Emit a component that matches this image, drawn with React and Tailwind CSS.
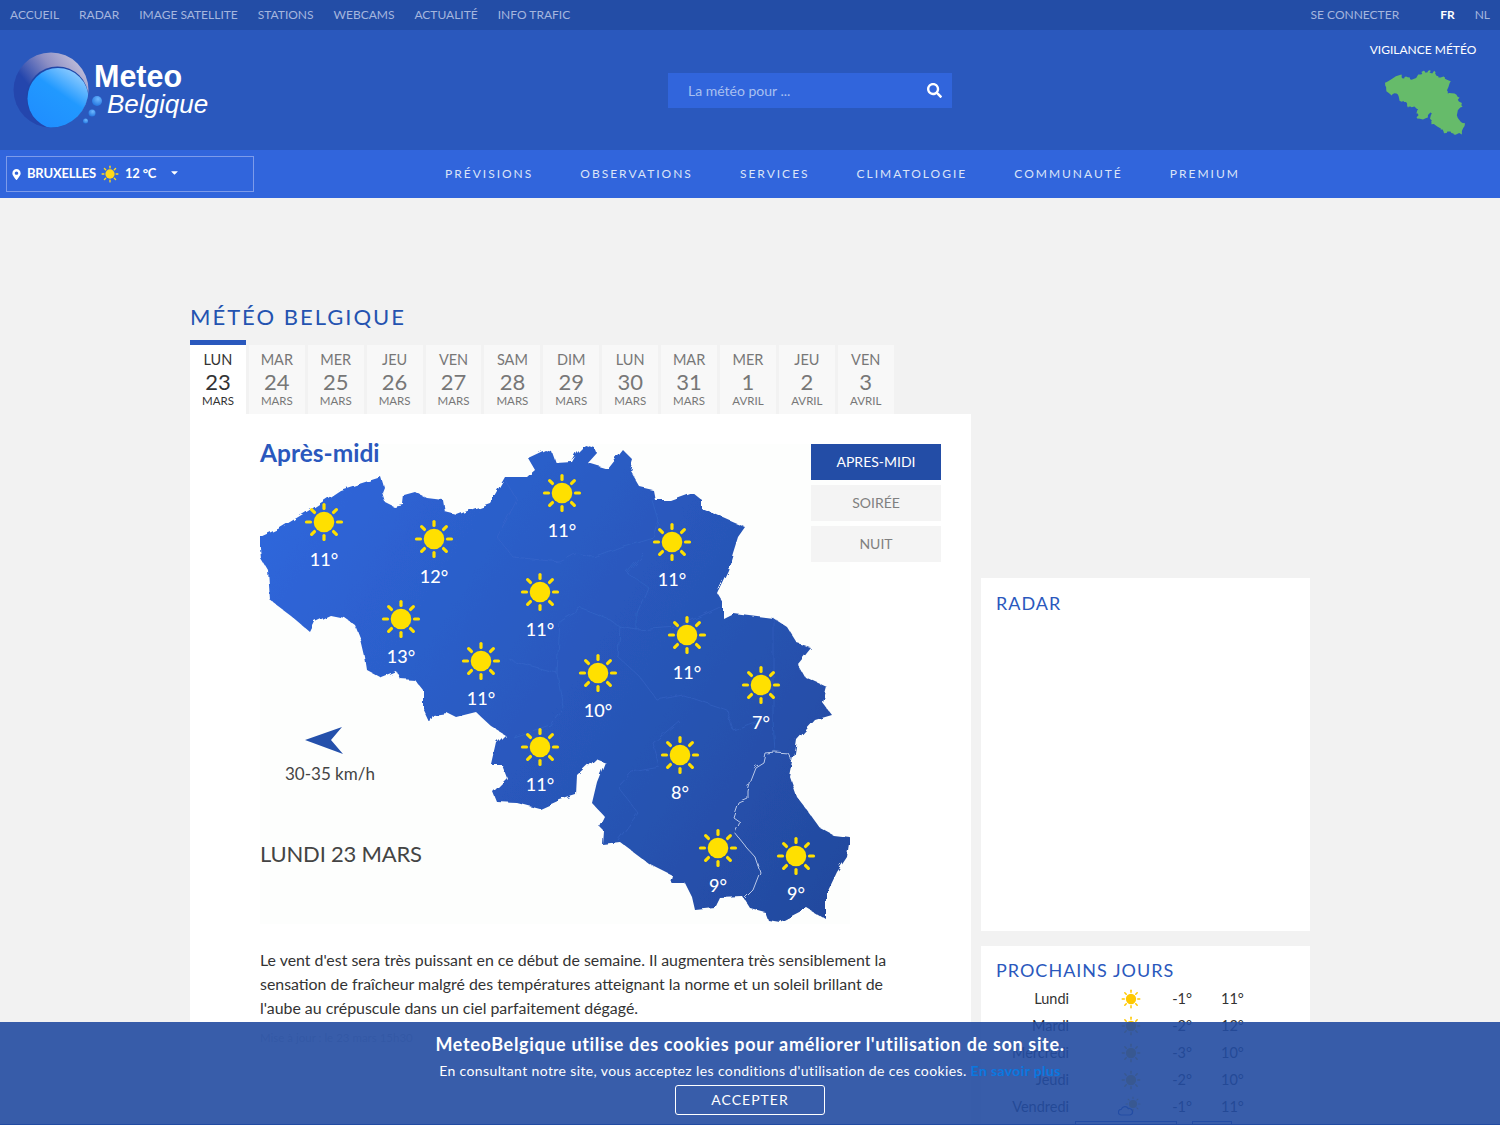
import { FaSearch, FaMapMarkerAlt, FaCaretDown } from "react-icons/fa";

const topLinks = ["Accueil", "Radar", "Image satellite", "Stations", "Webcams", "Actualité", "Info trafic"];
const navLinks = ["Prévisions", "Observations", "Services", "Climatologie", "Communauté", "Premium"];

const days = [
  ["LUN", "23", "MARS"], ["MAR", "24", "MARS"], ["MER", "25", "MARS"], ["JEU", "26", "MARS"],
  ["VEN", "27", "MARS"], ["SAM", "28", "MARS"], ["DIM", "29", "MARS"], ["LUN", "30", "MARS"],
  ["MAR", "31", "MARS"], ["MER", "1", "AVRIL"], ["JEU", "2", "AVRIL"], ["VEN", "3", "AVRIL"],
];

// sun centres on the map, in page coordinates
const pins = [
  [324, 522, "11°"], [434, 539, "12°"], [562, 493, "11°"], [672, 542, "11°"], [540, 592, "11°"],
  [401, 619, "13°"], [481, 661, "11°"], [598, 673, "10°"], [687, 635, "11°"], [761, 685, "7°"],
  [540, 747, "11°"], [680, 755, "8°"], [718, 848, "9°"], [796, 856, "9°"],
];

const nextDays = [
  ["Lundi", "-1°", "11°"], ["Mardi", "-2°", "12°"], ["Mercredi", "-3°", "10°"],
  ["Jeudi", "-2°", "10°"], ["Vendredi", "-1°", "11°"],
];

const belgium = "M260 537 L280 528 L313 508 L340 490 L381 477 L384 487 L382 492 L385 502 L393 506 L403 504 L404 495 L415 492 L427 498 L443 500 L445 512 L457 515 L470 510 L490 503 L505 477 L527 477 L535 470 L528 458 L545 450 L552 452 L556 463 L572 462 L577 453 L585 445 L595 448 L597 453 L588 463 L608 469 L623 450 L633 460 L630 470 L640 487 L653 490 L655 500 L670 500 L692 492 L702 500 L702 509 L717 515 L735 523 L745 527 L738 537 L733 553 L728 570 L717 593 L723 603 L723 618 L733 613 L773 618 L787 627 L797 643 L810 647 L797 663 L805 677 L827 687 L823 703 L832 715 L815 720 L797 740 L795 753 L790 777 L797 797 L807 810 L820 828 L833 835 L850 837 L847 857 L837 872 L827 893 L827 920 L807 908 L780 922 L768 920 L765 912 L750 908 L743 897 L720 898 L715 908 L695 910 L692 897 L685 883 L670 883 L672 875 L648 863 L640 857 L620 842 L602 844 L603 830 L600 827 L605 817 L592 803 L597 782 L605 762 L595 758 L577 775 L576 795 L560 800 L540 809 L517 803 L497 802 L493 792 L507 778 L502 765 L492 765 L497 743 L505 735 L492 727 L477 713 L457 718 L447 713 L433 715 L430 723 L423 708 L423 690 L415 680 L400 679 L397 672 L382 678 L367 670 L365 657 L361 640 L355 625 L345 618 L330 615 L315 622 L310 632 L290 615 L270 600 L268 570 L262 560 Z";

const provinces = [
  "M652 500 L658 520 L653 537 L620 547 L593 557 L577 553 L560 562 L513 557 L497 537 L517 500 L505 480",
  "M643 553 L627 573 L648 587 L637 613 L637 630 L620 627 L610 620 L580 608 L560 620 L557 673 L563 707 L550 725 L513 737",
  "M637 630 L677 627 L720 607",
  "M620 627 L618 657 L640 677 L657 700 L683 695 L727 710 L733 730 L760 720",
  "M773 618 L773 720 L775 752",
  "M680 720 L653 743 L660 767 L632 772 L618 787 L638 813 L618 840",
  "M510 660 L557 673",
];

const luxembourg = "M793 762 L788 753 L775 752 L765 753 L763 762 L755 767 L750 780 L747 790 L747 798 L738 802 L733 817 L740 822 L735 833 L747 848 L755 857 L760 872 L753 890 L745 898";

function Sun({ size = 40, color = "#ffe000", ray = 3.2 }) {
  const rays = [0, 45, 90, 135, 180, 225, 270, 315];
  return (
    <svg width={size} height={size} viewBox="0 0 40 40" className="block">
      <circle cx="20" cy="20" r="10.3" fill={color} />
      {rays.map(a => (
        <line key={a} x1="20" y1="6.5" x2="20" y2="2.5" stroke={color} strokeWidth={ray} strokeLinecap="round"
          transform={`rotate(${a} 20 20)`} />
      ))}
    </svg>
  );
}

function Logo() {
  return (
    <svg width="100" height="80" viewBox="10 50 100 80" className="block">
      <defs>
        <linearGradient id="shell" x1="0" y1="0.8" x2="1" y2="0">
          <stop offset="0.3" stopColor="#2446ad" />
          <stop offset="0.6" stopColor="#8d8fc4" />
          <stop offset="1" stopColor="#d8d4e4" />
        </linearGradient>
        <linearGradient id="ball" x1="0.2" y1="1" x2="0.9" y2="0">
          <stop offset="0" stopColor="#1f8dff" />
          <stop offset="0.55" stopColor="#2199ff" />
          <stop offset="1" stopColor="#a8d8ff" />
        </linearGradient>
        <radialGradient id="bubble" cx="0.6" cy="0.3" r="0.8">
          <stop offset="0" stopColor="#6db8ff" />
          <stop offset="1" stopColor="#1c6fdc" />
        </radialGradient>
        <clipPath id="outer"><circle cx="51" cy="90" r="37.5" /></clipPath>
      </defs>
      <circle cx="51" cy="90" r="37.5" fill="url(#shell)" />
      <g clipPath="url(#outer)">
        <circle cx="57.5" cy="97.5" r="31" fill="#1f47a8" />
        <circle cx="58" cy="98.5" r="30.5" fill="url(#ball)" />
      </g>
      <circle cx="97" cy="101" r="5" fill="url(#bubble)" />
      <circle cx="92" cy="113" r="3.5" fill="url(#bubble)" />
      <circle cx="85.5" cy="121" r="2.5" fill="url(#bubble)" />
    </svg>
  );
}

function BelgiumMap() {
  return (
    <svg viewBox="260 444 590 480" className="absolute inset-0 w-full h-full">
      <defs>
        <linearGradient id="land" gradientUnits="userSpaceOnUse" x1="280" y1="520" x2="840" y2="880">
          <stop offset="0" stopColor="#2f66da" />
          <stop offset="1" stopColor="#234a9f" />
        </linearGradient>
        {/* roughens the hand traced border */}
        <filter id="rough" x="-5%" y="-5%" width="110%" height="110%">
          <feTurbulence type="fractalNoise" baseFrequency="0.09" numOctaves="2" seed="4" />
          <feDisplacementMap in="SourceGraphic" scale="6" />
        </filter>
      </defs>
      <g filter="url(#rough)">
        <path d={belgium} fill="url(#land)" />
        {provinces.map((d, i) => (
          <path key={i} d={d} fill="none" stroke="#3f6fd0" strokeWidth="1" opacity="0.35" />
        ))}
        <path d={luxembourg} fill="none" stroke="#b9c8e8" strokeWidth="1" />
      </g>
    </svg>
  );
}

export default function App() {
  return (
    <div className="relative h-screen overflow-hidden bg-[#f2f2f2] font-[Lato,sans-serif] text-[#333]">
      {/* top links */}
      <div className="h-[30px] pb-[1px] bg-[#234da6] flex items-center justify-between pl-[10px] pr-[10px] text-[12px] uppercase text-[#a5b6de]">
        <div className="flex gap-[20px]">
          {topLinks.map(l => <span key={l}>{l}</span>)}
        </div>
        <div className="flex items-center">
          <span className="mr-[41px]">Se connecter</span>
          <span className="mr-[20px] font-bold text-white">FR</span>
          <span>NL</span>
        </div>
      </div>

      {/* header */}
      <div className="h-[120px] bg-[#2a58bd] flex items-start">
        <div className="flex w-[658px] ml-[10px] mt-[20px]">
          <Logo />
          <div className="-ml-[16px] mt-[11px] font-['Liberation_Sans',sans-serif] text-white">
            <div className="text-[30.5px] leading-[30px] font-bold">Meteo</div>
            <div className="ml-[13px] text-[26px] leading-[26px] italic">Belgique</div>
          </div>
        </div>
        <div className="relative mt-[43px] w-[284px] h-[35px]">
          <input
            placeholder="La météo pour ..."
            className="w-full h-full bg-[#3165dc] pl-[20px] text-[14px] text-white placeholder:text-[#a9c0f0] outline-none"
          />
          <FaSearch className="absolute right-[10px] top-[10px] text-white text-[15px]" />
        </div>
        <div className="ml-auto mr-[24px] mt-[12px] w-[106px] flex flex-col items-center">
          <div className="text-[12px] leading-[15px] text-white whitespace-nowrap">VIGILANCE MÉTÉO</div>
          <svg viewBox="260 445 590 477" className="w-[80px] h-[65px] mt-[13px] ml-[4px]">
            <path d={belgium} fill="#66bb6a" />
          </svg>
        </div>
      </div>

      {/* main nav */}
      <div className="h-[48px] bg-[#3165dc] flex items-center pl-[6px]">
        <div className="w-[248px] h-[36px] border border-[#7d9bea] flex items-center pl-[4px] text-white text-[13px] font-bold tracking-[-0.2px]">
          <FaMapMarkerAlt className="text-[11px]" />
          <span className="ml-[5px]">BRUXELLES</span>
          <span className="ml-[5px]"><Sun size={18} color="#ffd91a" ray={3} /></span>
          <span className="ml-[6px]">12 °C</span>
          <FaCaretDown className="ml-[13px] text-[11px] -mt-[3px]" />
        </div>
        <div className="flex gap-[47px] ml-[191px] text-[12px] uppercase tracking-[2px] text-[#dbe4f8]">
          {navLinks.map(l => <span key={l}>{l}</span>)}
        </div>
      </div>

      {/* content */}
      <div className="flex pl-[190px] gap-[10px]">
        <div className="w-[781px] pt-[105px] shrink-0">
          <h1 className="text-[22px] leading-[28px] tracking-[2px] text-[#2453b0] uppercase">Météo Belgique</h1>
          <div className="flex gap-[3px] mt-[9px]">
            {days.map(([d, n, m], i) => (
              <div
                key={d + n}
                className={i === 0
                  ? "w-[55.9px] h-[74px] bg-white border-t-[5px] border-[#2a58bd] text-center text-[#333]"
                  : "w-[55.9px] h-[69px] mt-[5px] bg-[#f8f8f8] text-center text-[#777]"}
              >
                <div className="text-[14.5px] leading-[15px] pt-[7px]">{d}</div>
                <div className="text-[22px] leading-[25px] pt-[2px]">{n}</div>
                <div className="text-[11.5px] leading-[14px]">{m}</div>
              </div>
            ))}
          </div>

          <div className="bg-white pl-[70px] pr-[30px] pt-[30px] h-[800px]">
            <div className="relative w-[590px] h-[480px] bg-[#fdfefd]">
              <BelgiumMap />
              <div className="absolute left-0 -top-[7px] text-[24.5px] leading-[32px] font-bold text-[#2a58bd]">Après-midi</div>

              {pins.map(([x, y, t]) => (
                <div key={`${x}-${y}`} className="absolute w-[60px] flex flex-col items-center" style={{ left: x - 260 - 30, top: y - 444 - 20 }}>
                  <Sun />
                  <div className="text-[18px] leading-[22px] font-medium text-white mt-[6px]">{t}</div>
                </div>
              ))}

              <svg viewBox="0 0 38 28" className="absolute left-[45px] top-[283px] w-[38px] h-[28px]">
                <path d="M0 13 L37 0 L26 13 L38 27 Z" fill="#2450ab" />
              </svg>
              <div className="absolute left-[25px] top-[318px] text-[17px] leading-[24px] text-[#444]">30-35 km/h</div>
              <div className="absolute left-0 top-[396px] text-[22px] leading-[28px] tracking-[-0.2px] text-[#444]">LUNDI 23 MARS</div>

              <div className="absolute left-[551px] top-0 w-[130px] flex flex-col gap-[5px] text-[14px] text-center">
                <div className="h-[36px] leading-[36px] bg-[#234da6] text-white">APRES-MIDI</div>
                <div className="h-[36px] leading-[36px] bg-[#f4f4f4] text-[#808080]">SOIRÉE</div>
                <div className="h-[36px] leading-[36px] bg-[#f4f4f4] text-[#808080]">NUIT</div>
              </div>
            </div>

            <p className="mt-[24px] w-[640px] text-[15.9px] leading-[24px] text-[#333]">
              Le vent d'est sera très puissant en ce début de semaine. Il augmentera très sensiblement la sensation de fraîcheur malgré des températures atteignant la norme et un soleil brillant de l'aube au crépuscule dans un ciel parfaitement dégagé.
            </p>
            <p className="mt-[10px] text-[11.5px] leading-[16px] text-[#ccc]">Mise à jour : le 23 mars 15h30</p>
          </div>
        </div>

        <div className="w-[329px] pt-[380px] shrink-0">
          <div className="bg-white h-[353px] pl-[15px] pt-[13px]">
            <h2 className="text-[18px] leading-[24px] tracking-[1px] text-[#2a58bd]">RADAR</h2>
          </div>
          <div className="bg-white mt-[15px] h-[300px] px-[15px] pt-[12px]">
            <h2 className="text-[18px] leading-[24px] tracking-[1px] text-[#2a58bd]">PROCHAINS JOURS</h2>
            <div className="mt-[3px]">
              {nextDays.map(([d, lo, hi], i) => (
                <div key={d} className="flex items-center h-[27px] text-[14.5px] text-[#333]">
                  <span className="w-[73px] text-right">{d}</span>
                  <span className="relative ml-[52px] w-[20px]">
                    {i === 4 ? (
                      <>
                        <span className="relative block left-[4px] -top-[3px]"><Sun size={16} color="#ffc800" ray={3} /></span>
                        <svg viewBox="0 0 20 12" className="absolute -left-[3px] top-[7px] w-[16px] h-[10px]">
                          <path d="M4 11 a3.5 3.5 0 0 1 0 -7 a5 5 0 0 1 9 -1 a4 4 0 0 1 2 8 Z" fill="none" stroke="#2a58bd" strokeWidth="1.5" />
                        </svg>
                      </>
                    ) : (
                      <Sun size={20} color="#ffc800" ray={3} />
                    )}
                  </span>
                  <span className="ml-[29px] w-[22px] text-right">{lo}</span>
                  <span className="ml-[29px] w-[22px] text-right">{hi}</span>
                </div>
              ))}
            </div>
            <div className="flex ml-[79px] mt-[1px]">
              <div className="w-[102px] h-[20px] border border-[#2a58bd]" />
              <div className="w-[40px] h-[20px] ml-[15px] border border-[#2a58bd]" />
            </div>
          </div>
        </div>
      </div>

      {/* cookie banner */}
      <div className="absolute bottom-0 left-0 right-0 h-[103px] bg-[#224ba1]/90 border-b border-[#224ba1] flex flex-col items-center pt-[10px] text-white">
        <div className="text-[18px] leading-[24px] font-bold tracking-[0.66px]">MeteoBelgique utilise des cookies pour améliorer l'utilisation de son site.</div>
        <div className="mt-[5px] text-[14px] leading-[20px] tracking-[0.38px]">
          En consultant notre site, vous acceptez les conditions d'utilisation de ces cookies. <span className="font-bold text-[#0a78e0]">En savoir plus</span>
        </div>
        <div className="mt-[4px] w-[150px] h-[30px] leading-[28px] border border-white rounded-[3px] text-center text-[14px] tracking-[1px]">ACCEPTER</div>
      </div>
    </div>
  );
}
